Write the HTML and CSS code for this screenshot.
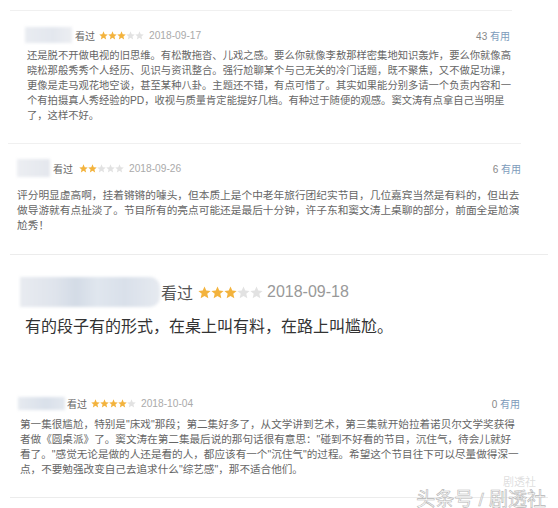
FILE: index.html
```html
<!DOCTYPE html>
<html lang="zh-CN">
<head>
    <meta charset="UTF-8">
    <meta name="viewport" content="width=device-width, initial-scale=1.0">
    <title>短评</title>
    <link rel="stylesheet" href="styles.css">
</head>
<body>
    <svg class="defs" width="0" height="0" aria-hidden="true">
        <symbol id="star" viewBox="0 0 10 10">
            <path d="M5 0.4 L6.35 3.55 L9.7 3.8 L7.15 6 L7.95 9.4 L5 7.6 L2.05 9.4 L2.85 6 L0.3 3.8 L3.65 3.55 Z"/>
        </symbol>
    </svg>

    <div class="page">
        <div class="review r1">
            <div class="meta">
                <div class="who">
                    <span class="name"></span>
                    <span class="status">看过</span>
                    <span class="stars">
                        <svg class="on"><use href="#star"/></svg><svg class="on"><use href="#star"/></svg><svg class="on"><use href="#star"/></svg><svg><use href="#star"/></svg><svg><use href="#star"/></svg>
                    </span>
                    <span class="date">2018-09-17</span>
                </div>
                <div class="votes"><span class="count">43</span> <span class="useful">有用</span></div>
            </div>
            <p class="text">还是脱不开做电视的旧思维。有松散拖沓、儿戏之感。要么你就像李敖那样密集地知识轰炸，要么你就像高<br>晓松那般秀秀个人经历、见识与资讯整合。强行尬聊某个与己无关的冷门话题，既不聚焦，又不做足功课，<br>更像是走马观花地空谈，甚至某种八卦。主题还不错，有点可惜了。其实如果能分别多请一个负责内容和一<br>个有拍摄真人秀经验的PD，收视与质量肯定能提好几档。有种过于随便的观感。窦文涛有点拿自己当明星<br>了，这样不好。</p>
        </div>

        <div class="review r2">
            <div class="meta">
                <div class="who">
                    <span class="name"></span>
                    <span class="status">看过</span>
                    <span class="stars">
                        <svg class="on"><use href="#star"/></svg><svg class="on"><use href="#star"/></svg><svg><use href="#star"/></svg><svg><use href="#star"/></svg><svg><use href="#star"/></svg>
                    </span>
                    <span class="date">2018-09-26</span>
                </div>
                <div class="votes"><span class="count">6</span> <span class="useful">有用</span></div>
            </div>
            <p class="text">评分明显虚高啊，挂着锵锵的噱头，但本质上是个中老年旅行团纪实节目，几位嘉宾当然是有料的，但出去<br>做导游就有点扯淡了。节目所有的亮点可能还是最后十分钟，许子东和窦文涛上桌聊的部分，前面全是尬演<br>尬秀！</p>
        </div>

        <div class="review r3">
            <div class="meta">
                <div class="who">
                    <span class="name"></span>
                    <span class="status">看过</span>
                    <span class="stars">
                        <svg class="on"><use href="#star"/></svg><svg class="on"><use href="#star"/></svg><svg class="on"><use href="#star"/></svg><svg><use href="#star"/></svg><svg><use href="#star"/></svg>
                    </span>
                    <span class="date">2018-09-18</span>
                </div>
            </div>
            <p class="text">有的段子有的形式，在桌上叫有料，在路上叫尴尬。</p>
        </div>

        <div class="review r4">
            <div class="meta">
                <div class="who">
                    <span class="name"></span>
                    <span class="status">看过</span>
                    <span class="stars">
                        <svg class="on"><use href="#star"/></svg><svg class="on"><use href="#star"/></svg><svg class="on"><use href="#star"/></svg><svg class="on"><use href="#star"/></svg><svg><use href="#star"/></svg>
                    </span>
                    <span class="date">2018-10-04</span>
                </div>
                <div class="votes"><span class="count">0</span> <span class="useful">有用</span></div>
            </div>
            <p class="text">第一集很尴尬，特别是"床戏"那段；第二集好多了，从文学讲到艺术，第三集就开始拉着诺贝尔文学奖获得<br>者做《圆桌派》了。窦文涛在第二集最后说的那句话很有意思："碰到不好看的节目，沉住气，待会儿就好<br>看了。"感觉无论是做的人还是看的人，都应该有一个"沉住气"的过程。希望这个节目往下可以尽量做得深一<br>点，不要勉强改变自己去追求什么"综艺感"，那不适合他们。</p>
        </div>

        <!-- watermark sits over the last separator -->
        <div class="mark">
            <span class="mark-small">剧透社</span>
            <span class="mark-big">头条号 / 剧透社</span>
        </div>
    </div>
</body>
</html>
```

FILE: styles.css
```css
html,
body {
    margin: 0;
    padding: 0;
    background: #fff;
    font-family: "Liberation Sans", "Noto Sans CJK SC", sans-serif;
    overflow: hidden;
}

.defs {
    position: absolute;
    width: 0;
    height: 0;
}

.page {
    position: relative;
    width: 558px;
    height: 508px;
}

.review {
    box-sizing: border-box;
}

.meta {
    display: flex;
    align-items: center;
    justify-content: space-between;
    height: 16px;
}

.who {
    display: flex;
    align-items: center;
}

.name {
    display: block;
    filter: blur(1.5px);
}

.status {
    color: #666;
    font-size: 10px;
}

.stars {
    display: flex;
    margin: 0 5px 0 4px;
}

.stars svg {
    width: 9px;
    height: 9px;
    fill: #e2e2e2;
}

.stars svg.on {
    fill: #f3b33d;
}

.date {
    color: #aaa;
    font-size: 10.2px;
}

.votes {
    font-size: 10px;
    color: #888;
}

.useful {
    color: #7d9bbb;
}

.text {
    margin: 0;
    white-space: nowrap;
    color: #666;
    font-size: 10.3px;
    line-height: 15px;
}

/* first review */
.r1 {
    margin: 10px 0 0 10px;
    width: 502px;
    border-top: 1px solid #f0f0f0;
    padding: 16px 2px 0 15px;
}

.r1 .name {
    width: 47px;
    height: 16px;
    margin-right: 3px;
    background: linear-gradient(90deg, #e9ecf1, #e3e7ee 60%, #eceef2);
}

.r1 .text {
    margin: 5px 0 0 2px;
}

/* second review */
.r2 {
    margin: 20px 0 0 8px;
    width: 513px;
    border-top: 1px solid #f0f0f0;
    padding: 16px 0 0 9px;
}

.r2 .name {
    width: 33px;
    height: 18px;
    margin-right: 3px;
    background: linear-gradient(90deg, #eceef2, #e4e7ed);
}

.r2 .stars {
    margin-left: 6px;
}

.r2 .text {
    margin-top: 12px;
    font-size: 10.7px;
}

/* third review, bigger crop */
.r3 {
    margin: 21px 0 0 10px;
    width: 538px;
    border-top: 1px solid #ececec;
    padding: 22px 0 0 10px;
}

.r3 .meta {
    height: 30px;
}

.r3 .name {
    width: 140px;
    height: 30px;
    margin-right: 1px;
    background: linear-gradient(90deg, #e8ebf0 0%, #dfe4ec 25%, #d3dbe6 40%, #e0e6ee 55%, #d9e0ea 75%, #e6eaf0 100%);
    border-radius: 0 10px 10px 0;
}

.r3 .status {
    color: #555;
    font-size: 16px;
}

.r3 .stars {
    margin: 0 4px 0 5px;
}

.r3 .stars svg {
    width: 13px;
    height: 13px;
}

.r3 .date {
    font-size: 16px;
    color: #999;
}

.r3 .text {
    margin: 9px 0 0 5px;
    color: #333;
    font-size: 16px;
    line-height: 22px;
}

/* fourth review */
.r4 {
    margin: 57px 0 0 10px;
    width: 538px;
    border-bottom: 1px solid #ececec;
    padding: 0 28px 20px 8px;
}

.r4 .name {
    width: 47px;
    height: 13px;
    margin-right: 2px;
    background: linear-gradient(90deg, #e6eaf0, #d9e0ea 60%, #e3e8ef);
}

.r4 .text {
    margin: 6px 0 0 2px;
    font-size: 10.6px;
}

.mark {
    position: absolute;
    right: 12px;
    top: 466px;
    display: flex;
    flex-direction: column;
    align-items: flex-end;
}

.mark-small {
    font-size: 11px;
    color: rgba(170, 170, 170, 0.4);
    margin-right: 10px;
    line-height: 12px;
}

.mark-big {
    font-size: 19px;
    line-height: 24px;
    color: rgba(255, 255, 255, 0.92);
    -webkit-text-stroke: 0.6px #b5b5b5;
}
```
